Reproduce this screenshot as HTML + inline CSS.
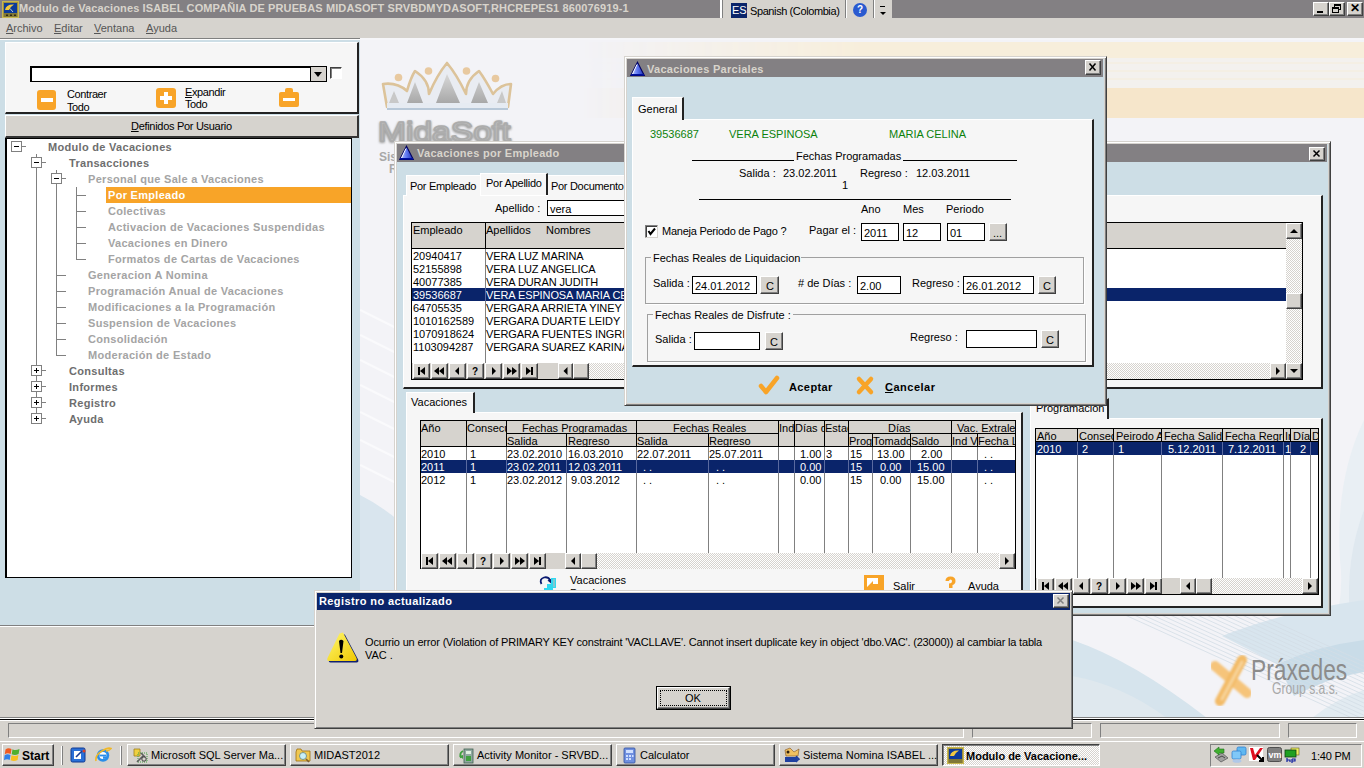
<!DOCTYPE html>
<html><head><meta charset="utf-8">
<style>
*{box-sizing:border-box;margin:0;padding:0}
html,body{width:1364px;height:768px;overflow:hidden;position:relative;background:#d6d3ce;font-family:"Liberation Sans",sans-serif;font-size:11px;color:#000}
.a{position:absolute}
.t{position:absolute;white-space:pre;line-height:13px}
.b{font-weight:bold}
.out{border-top:1px solid #fff;border-left:1px solid #fff;border-right:1px solid #404040;border-bottom:1px solid #404040}
.btn{position:absolute;background:#d6d3ce;border:1px solid;border-color:#fff #404040 #404040 #fff;box-shadow:inset -1px -1px 0 #808080}
.sunk{position:absolute;background:#fff;border:1px solid;border-color:#808080 #fff #fff #808080;box-shadow:inset 1px 1px 0 #404040}
.win{position:absolute;border:1px solid;border-color:#d6d3ce #404040 #404040 #d6d3ce;box-shadow:inset 1px 1px 0 #fff,inset -1px -1px 0 #808080}
.ttl{position:absolute;background:#808080;color:#d6d3ce;font-weight:bold;letter-spacing:0.25px}
.xb{position:absolute;width:16px;height:14px;background:#d6d3ce;border:1px solid;border-color:#fff #404040 #404040 #fff;box-shadow:inset -1px -1px 0 #808080}
.grid{position:absolute;background:#fff;border:1px solid #000}
.hdr{position:absolute;background:#d6d3ce}
.vl{position:absolute;width:1px;background:#808080}
.hl{position:absolute;height:1px;background:#808080}
.sel{position:absolute;background:#0a246a}
.inp{position:absolute;background:#fff;border:1px solid #000;box-shadow:inset 1px 1px 0 #808080}
.tree{color:#6e6e6e;font-weight:bold;letter-spacing:0.3px}
.tree2{color:#a4a4a4;font-weight:bold;letter-spacing:0.3px}
.pm{position:absolute;width:11px;height:11px;border:1px solid #808080;background:#fff}
.pm:after{content:"";position:absolute;left:2px;top:4px;width:5px;height:1px;background:#000}
.pm.p:before{content:"";position:absolute;left:4px;top:2px;width:1px;height:5px;background:#000}
.tl{position:absolute;background:#808080}
</style></head><body>

<!-- ===== MAIN TITLE BAR ===== -->
<div class="a" style="left:0;top:0;width:1364px;height:18px;background:#838083"></div>
<svg class="a" style="left:2px;top:1px" width="17" height="17"><rect x="0.5" y="0.5" width="16" height="16" fill="#a09040" stroke="#c8b850"/><rect x="2" y="2" width="13" height="10" fill="#0c3a9a"/><path d="M3 9 Q4 3 12 3.5 Q8 6 7 9Z" fill="#f0c840"/><path d="M8 7.5 L11 11" stroke="#c0d0d0" stroke-width="1"/><rect x="2" y="12" width="13" height="4" fill="#807838"/><rect x="4" y="13.5" width="2" height="1.5" fill="#302810"/><rect x="8" y="13.5" width="2" height="1.5" fill="#302810"/><rect x="12" y="13.5" width="2" height="1.5" fill="#302810"/></svg>
<div class="t b" style="left:19px;top:2px;color:#d8d4cc;letter-spacing:0.12px">Modulo de Vacaciones ISABEL COMPAÑIA DE PRUEBAS MIDASOFT SRVBDMYDASOFT,RHCREPES1 860076919-1</div>

<!-- language bar -->
<div class="a" style="left:720px;top:0;width:172px;height:22px;background:#d6d3ce"></div><div class="a" style="left:720px;top:0;width:3px;height:21px;border-left:2px solid #fff;border-right:1px solid #808080;border-bottom:1px solid #808080"></div>
<div class="a" style="left:731px;top:3px;width:16px;height:15px;background:#0a246a"></div>
<div class="t" style="left:732px;top:4px;color:#fff;font-size:11px">ES</div>
<div class="t" style="left:750px;top:5px;letter-spacing:-0.4px">Spanish (Colombia)</div>
<div class="a" style="left:845px;top:0;width:1px;height:21px;background:#808080"></div>
<div class="a" style="left:846px;top:0;width:1px;height:21px;background:#fff"></div>
<div class="a" style="left:873px;top:0;width:1px;height:21px;background:#808080"></div>
<div class="a" style="left:874px;top:0;width:1px;height:21px;background:#fff"></div>
<div class="a" style="left:853px;top:3px;width:14px;height:14px;border-radius:50%;background:#2a5ad0;color:#fff;font-weight:bold;font-size:10px;text-align:center;line-height:14px">?</div>
<div class="a" style="left:880px;top:6px;width:5px;height:1px;background:#000"></div>
<div class="a" style="left:880px;top:12px;width:0;height:0;border-left:3px solid transparent;border-right:3px solid transparent;border-top:3px solid #000"></div>

<!-- window buttons -->
<div class="xb" style="left:1313px;top:2px;width:16px;height:14px"></div>
<div class="a" style="left:1317px;top:11px;width:6px;height:2px;background:#000"></div>
<div class="xb" style="left:1329px;top:2px;width:16px;height:14px"></div>
<div class="a" style="left:1334px;top:4px;width:7px;height:6px;border:1px solid #000;border-top-width:2px"></div>
<div class="a" style="left:1332px;top:7px;width:7px;height:6px;border:1px solid #000;border-top-width:2px;background:#d6d3ce"></div>
<div class="xb" style="left:1347px;top:2px;width:16px;height:14px"></div>
<div class="t" style="left:1350px;top:2px;font-size:12px;font-weight:bold">✕</div>

<!-- ===== MENU BAR ===== -->
<div class="a" style="left:0;top:18px;width:1364px;height:20px;background:#d6d3ce"></div>
<div class="t" style="left:6px;top:22px;color:#555"><u>A</u>rchivo</div>
<div class="t" style="left:54px;top:22px;color:#555"><u>E</u>ditar</div>
<div class="t" style="left:94px;top:22px;color:#555"><u>V</u>entana</div>
<div class="t" style="left:146px;top:22px;color:#555"><u>A</u>yuda</div>
<div class="a" style="left:0;top:38px;width:360px;height:1px;background:#808080"></div>
<div class="a" style="left:0;top:39px;width:360px;height:1px;background:#fff"></div><div class="a" style="left:360px;top:38px;width:1004px;height:2px;background:#f6f6f9"></div>

<!-- ===== MDI BACKGROUND ===== -->
<svg id="mdi" class="a" style="left:360px;top:40px" width="1004" height="677">
<defs>
<linearGradient id="fadeR" x1="0" y1="0" x2="1" y2="0"><stop offset="0.22" stop-color="#fff" stop-opacity="0"/><stop offset="0.5" stop-color="#fff" stop-opacity="1"/></linearGradient>
<mask id="mR"><rect width="1004" height="677" fill="url(#fadeR)"/></mask>
<linearGradient id="vfade" x1="0" y1="0" x2="0" y2="1"><stop offset="0" stop-color="#eef0f4"/><stop offset="1" stop-color="#f2f3f6"/></linearGradient>
</defs>
<rect width="1004" height="677" fill="#f3f3f7"/>
<g mask="url(#mR)">
<rect y="2" width="1004" height="16" fill="#f7eedb"/>
<rect y="18" width="1004" height="30" fill="#f3f1ee"/>
<rect y="22" width="1004" height="2" fill="#f4efe4"/>
<rect y="30" width="1004" height="2" fill="#f4efe4"/>
<rect y="38" width="1004" height="2" fill="#f4efe4"/>
<rect y="48" width="1004" height="30" fill="#f6e6cb"/>
</g>
<path d="M0 455 Q30 470 60 500 L60 677 L0 677Z" fill="#d9e5ee"/>
<g stroke="#fbfbfd" stroke-width="2" opacity="0.9"><path d="M0 270 L40 290"/><path d="M0 295 L40 315"/><path d="M0 320 L40 340"/><path d="M0 345 L40 365"/><path d="M0 372 L40 392"/><path d="M0 400 L40 420"/><path d="M0 425 L40 445"/></g>
<path d="M1004 380 Q975 440 980 520 Q985 560 970 600 L1004 600Z" fill="#e9eff4"/>
<path d="M1004 470 Q985 520 990 575 L1004 575Z" fill="#dfe8ef"/>
<path d="M712 677 L712 600 Q740 610 780 640 Q800 660 806 677Z" fill="#dfe8ee"/>
</svg>
<!-- ===== LEFT DOCK ===== -->
<div class="a" style="left:0;top:40px;width:360px;height:585px;background:#cddee6"></div>
<div class="a" style="left:0;top:625px;width:360px;height:1px;background:#808080"></div>
<div class="a" style="left:0;top:626px;width:360px;height:1px;background:#fff"></div>
<div class="a" style="left:0;top:627px;width:360px;height:90px;background:#d6d3ce"></div>

<!-- top panel -->
<div class="a" style="left:5px;top:42px;width:354px;height:72px;background:#f6f6f6;border-right:2px solid #222;border-bottom:2px solid #222;border-top:1px solid #fff;border-left:1px solid #fff"></div>
<div class="a" style="left:30px;top:66px;width:297px;height:16px;background:#fff;border:2px solid #000;border-right-width:1px;border-bottom-width:1px"></div>
<div class="a" style="left:310px;top:67px;width:16px;height:14px;background:#d6d3ce;border-left:1px solid #000"></div>
<div class="a" style="left:314px;top:72px;width:0;height:0;border-left:4px solid transparent;border-right:4px solid transparent;border-top:5px solid #000"></div>
<div class="a" style="left:330px;top:67px;width:12px;height:12px;background:#fff;border:1px solid;border-color:#404040 #fff #fff #404040;box-shadow:inset 1px 1px 0 #808080"></div>
<!-- contraer -->
<div class="a" style="left:37px;top:90px;width:19px;height:20px;background:#f8a428;border-radius:3px"></div>
<div class="a" style="left:41px;top:98px;width:12px;height:4px;background:#fff"></div>
<div class="t" style="left:67px;top:88px;letter-spacing:-0.4px">Contraer</div>
<div class="t" style="left:67px;top:101px;letter-spacing:-0.4px">Todo</div>
<!-- expandir -->
<div class="a" style="left:156px;top:88px;width:20px;height:20px;background:#f8a428;border-radius:3px"></div>
<div class="a" style="left:160px;top:96px;width:12px;height:4px;background:#fff"></div>
<div class="a" style="left:164px;top:92px;width:4px;height:12px;background:#fff"></div>
<div class="t" style="left:185px;top:86px;letter-spacing:-0.4px"><u>E</u>xpandir</div>
<div class="t" style="left:185px;top:98px;letter-spacing:-0.4px">Todo</div>
<!-- third icon -->
<div class="a" style="left:285px;top:88px;width:8px;height:5px;background:#f8a428;border-radius:2px 2px 0 0"></div>
<div class="a" style="left:279px;top:92px;width:20px;height:15px;background:#f8a428;border-radius:2px"></div>
<div class="a" style="left:283px;top:98px;width:12px;height:3px;background:#fff"></div>

<!-- definidos button -->
<div class="a" style="left:5px;top:115px;width:354px;height:23px;background:#d6d3ce;border-right:2px solid #333;border-bottom:2px solid #333;border-top:1px solid #fff;border-left:1px solid #fff"></div>
<div class="t" style="left:131px;top:120px;letter-spacing:-0.3px"><u>D</u>efinidos Por Usuario</div>

<!-- tree -->
<div id="tree" class="a" style="left:5px;top:138px;width:347px;height:440px;background:#fff;border:1px solid #000;border-left-width:2px"></div>
<svg width="0" height="0" style="position:absolute"><defs><linearGradient id="tg" x1="0" y1="0" x2="1" y2="1"><stop offset="0" stop-color="#e0ecff"/><stop offset="0.45" stop-color="#6080f8"/><stop offset="1" stop-color="#1838c0"/></linearGradient><filter id="bl" x="-20%" y="-20%" width="140%" height="140%"><feGaussianBlur stdDeviation="1.5"/></filter><filter id="bl2"><feGaussianBlur stdDeviation="1"/></filter><filter id="bl3" x="-20%" y="-20%" width="140%" height="140%"><feGaussianBlur stdDeviation="0.6"/></filter><linearGradient id="lg1" x1="0" y1="0" x2="0" y2="1"><stop offset="0" stop-color="#d8d8d8"/><stop offset="1" stop-color="#a8a8a8"/></linearGradient></defs></svg>
<!-- TREE -->
<div class="pm" style="left:11px;top:141px"></div>
<div class="tl" style="left:22px;top:146px;width:4px;height:1px"></div>
<div class="t tree" style="left:48px;top:141px">Modulo de Vacaciones</div>
<div class="pm" style="left:31px;top:157px"></div>
<div class="tl" style="left:42px;top:162px;width:4px;height:1px"></div>
<div class="t tree" style="left:69px;top:157px">Transacciones</div>
<div class="pm" style="left:51px;top:173px"></div>
<div class="tl" style="left:62px;top:178px;width:4px;height:1px"></div>
<div class="t tree2" style="left:88px;top:173px">Personal que Sale a Vacaciones</div>
<div class="tl" style="left:76px;top:195px;width:10px;height:1px"></div>
<div class="a" style="left:106px;top:187px;width:245px;height:16px;background:#f8a428"></div>
<div class="t b" style="left:108px;top:189px;color:#fff;letter-spacing:0.3px">Por Empleado</div>
<div class="tl" style="left:76px;top:211px;width:10px;height:1px"></div>
<div class="t tree2" style="left:108px;top:205px">Colectivas</div>
<div class="tl" style="left:76px;top:227px;width:10px;height:1px"></div>
<div class="t tree2" style="left:108px;top:221px">Activacion de Vacaciones Suspendidas</div>
<div class="tl" style="left:76px;top:243px;width:10px;height:1px"></div>
<div class="t tree2" style="left:108px;top:237px">Vacaciones en Dinero</div>
<div class="tl" style="left:76px;top:259px;width:10px;height:1px"></div>
<div class="t tree2" style="left:108px;top:253px">Formatos de Cartas de Vacaciones</div>
<div class="tl" style="left:56px;top:275px;width:10px;height:1px"></div>
<div class="t tree2" style="left:88px;top:269px">Generacion A Nomina</div>
<div class="tl" style="left:56px;top:291px;width:10px;height:1px"></div>
<div class="t tree2" style="left:88px;top:285px">Programación Anual de Vacaciones</div>
<div class="tl" style="left:56px;top:307px;width:10px;height:1px"></div>
<div class="t tree2" style="left:88px;top:301px">Modificaciones a la Programación</div>
<div class="tl" style="left:56px;top:323px;width:10px;height:1px"></div>
<div class="t tree2" style="left:88px;top:317px">Suspension de Vacaciones</div>
<div class="tl" style="left:56px;top:339px;width:10px;height:1px"></div>
<div class="t tree2" style="left:88px;top:333px">Consolidación</div>
<div class="tl" style="left:56px;top:355px;width:10px;height:1px"></div>
<div class="t tree2" style="left:88px;top:349px">Moderación de Estado</div>
<div class="pm p" style="left:31px;top:365px"></div>
<div class="tl" style="left:42px;top:370px;width:4px;height:1px"></div>
<div class="t tree" style="left:69px;top:365px">Consultas</div>
<div class="pm p" style="left:31px;top:381px"></div>
<div class="tl" style="left:42px;top:386px;width:4px;height:1px"></div>
<div class="t tree" style="left:69px;top:381px">Informes</div>
<div class="pm p" style="left:31px;top:397px"></div>
<div class="tl" style="left:42px;top:402px;width:4px;height:1px"></div>
<div class="t tree" style="left:69px;top:397px">Registro</div>
<div class="pm p" style="left:31px;top:413px"></div>
<div class="tl" style="left:42px;top:418px;width:4px;height:1px"></div>
<div class="t tree" style="left:69px;top:413px">Ayuda</div>
<div class="tl" style="left:36px;top:168px;width:1px;height:197px"></div>
<div class="tl" style="left:36px;top:376px;width:1px;height:5px"></div>
<div class="tl" style="left:36px;top:392px;width:1px;height:5px"></div>
<div class="tl" style="left:36px;top:408px;width:1px;height:5px"></div>
<div class="tl" style="left:36px;top:154px;width:1px;height:3px"></div>
<div class="tl" style="left:56px;top:184px;width:1px;height:171px"></div>
<div class="tl" style="left:56px;top:170px;width:1px;height:3px"></div>
<div class="tl" style="left:76px;top:187px;width:1px;height:73px"></div>

<svg class="a" style="left:375px;top:55px" width="150" height="130">
<g filter="url(#bl3)">
<path d="M8 29 Q22 27 32 36 Q36 22 40 16 Q54 25 54 39 Q62 20 72 8 Q82 20 91 39 Q91 25 104 16 Q110 24 118 39 Q126 29 136 29 L133 52 L12 52Z" fill="#e9ecf2" stroke="#dcc39a" stroke-width="2.6" stroke-linejoin="round"/>
</g>
<path d="M32 48 L40 27 L48 48Z M61 48 L72 19 L85 48Z M96 48 L104 27 L113 48Z" fill="url(#lg1)"/>
<path d="M14 48 L19 36 L24 48Z M122 48 L127 36 L131 48Z" fill="#c8c8c8"/>
<rect x="12" y="48" width="121" height="6" fill="#e6ebf2"/>
<rect x="12" y="53" width="121" height="2" fill="#b8c8d8"/>
<circle cx="23.5" cy="22.5" r="3.8" fill="#e8c9a0"/><circle cx="53.5" cy="16" r="3.8" fill="#e8c9a0"/><circle cx="91.5" cy="16" r="3.8" fill="#e8c9a0"/><circle cx="120.5" cy="23.5" r="3.8" fill="#e8c9a0"/>
<text transform="translate(3,87) scale(1.2,1)" font-family="Liberation Sans" font-size="28" fill="#a0a0a0" stroke="#a0a0a0" stroke-width="2.2" stroke-linejoin="round" filter="url(#bl2)">MidaSoft</text>
<text transform="translate(3,86) scale(1.2,1)" font-family="Liberation Sans" font-size="28" fill="#bdbdbd" stroke="#acacac" stroke-width="1.6" stroke-linejoin="round">MidaSoft</text>
<text x="4" y="106" font-family="Liberation Sans" font-weight="bold" font-size="12" fill="#a8a8a8">Sis</text>
<text x="14" y="118" font-family="Liberation Sans" font-weight="bold" font-size="12" fill="#a8a8a8">R</text></svg>
<svg class="a" style="left:1072px;top:600px" width="292" height="118">
<path d="M0 40 Q60 60 135 118 L95 118 Q50 85 0 76Z" fill="#d6e4ed"/>
<path d="M150 36 Q210 12 292 0 L292 42 Q240 48 205 64 Z" fill="#d8e5ee"/>
<path d="M205 64 Q245 46 292 40 L292 72 Q255 78 222 96 Z" fill="#c9dce8"/>
<path d="M240 118 Q265 98 292 90 L292 118Z" fill="#e2ebf1"/>
<g stroke="#d3dde6" stroke-width="0.8" fill="none"><path d="M20 0 L280 118"/><path d="M29 0 L289 118"/><path d="M38 0 L298 118"/><path d="M47 0 L307 118"/><path d="M56 0 L316 118"/><path d="M65 0 L325 118"/><path d="M74 0 L334 118"/><path d="M83 0 L343 118"/><path d="M92 0 L352 118"/><path d="M101 0 L361 118"/><path d="M110 0 L370 118"/><path d="M119 0 L379 118"/><path d="M128 0 L388 118"/><path d="M137 0 L397 118"/><path d="M146 0 L406 118"/><path d="M155 0 L415 118"/></g>
<g filter="url(#bl2)" stroke-linecap="round"><path d="M143 66 L175 93" stroke="#f6c47a" stroke-width="10"/><path d="M170 60 L148 101" stroke="#f3bb68" stroke-width="10"/><path d="M170 62 L150 99" stroke="#f8d49a" stroke-width="3"/></g>
<text transform="translate(179,80) scale(0.76,1)" font-family="Liberation Sans" font-size="30" fill="#8c8c8c">Práxedes</text>
<text transform="translate(200,94) scale(0.76,1)" font-family="Liberation Sans" font-size="16" fill="#a8a8a8">Group s.a.s.</text></svg>
<div class="a" style="left:394px;top:141px;width:937px;height:475px;background:#cddee6;border:1px solid;border-color:#d6d3ce #404040 #404040 #d6d3ce;box-shadow:inset 1px 1px 0 #fff,inset -1px -1px 0 #808080,inset 2px 2px 0 #d6d3ce,inset -2px -2px 0 #d6d3ce;"></div>
<div class="a" style="left:397px;top:144px;width:930px;height:18px;background:#838083"></div>
<svg class="a" style="left:399px;top:145px" width="16" height="16"><defs><linearGradient id="tg2" x1="0" y1="0" x2="1" y2="0"><stop offset="0" stop-color="#c8d4ff"/><stop offset="0.5" stop-color="#6078f0"/><stop offset="1" stop-color="#1a2cb0"/></linearGradient></defs><path d="M7.5 1.2L14.3 14.5H0.7Z" fill="url(#tg2)" stroke="#000060" stroke-width="1.1" stroke-linejoin="miter"/><path d="M7 3.5L2.5 13" stroke="#fff" stroke-width="1"/><rect x="1" y="13" width="13" height="1.6" fill="#0010a0"/></svg>
<div class="t b" style="left:417px;top:147px;letter-spacing:0.27px;color:#d8d4cc">Vacaciones por Empleado</div>
<div class="a" style="left:1309px;top:147px;width:16px;height:14px;background:#d6d3ce;border:1px solid;border-color:#fff #404040 #404040 #fff;box-shadow:inset -1px -1px 0 #808080;"></div>
<svg class="a" style="left:1309px;top:147px" width="16" height="14"><path d="M4.5 3.5L10.5 9.5M10.5 3.5L4.5 9.5" stroke="#000" stroke-width="1.5"/></svg>
<div class="a" style="left:403px;top:195px;width:920px;height:194px;background:#f6f6f6;border-top:1px solid #fff;border-left:1px solid #fff;border-right:2px solid #222;border-bottom:2px solid #222"></div>
<div class="a" style="left:406px;top:175px;width:74px;height:21px;background:#f6f6f6;border-top:1px solid #fff;border-left:1px solid #fff"></div>
<div class="t " style="left:410px;top:180px;letter-spacing:-0.3px">Por Empleado</div>
<div class="a" style="left:480px;top:173px;width:68px;height:22px;background:#f6f6f6;border-top:1px solid #fff;border-left:1px solid #fff;border-right:2px solid #222"></div>
<div class="t " style="left:486px;top:177px;letter-spacing:-0.25px">Por Apellido</div>
<div class="a" style="left:548px;top:175px;width:80px;height:21px;background:#f6f6f6;border-top:1px solid #fff"></div>
<div class="t " style="left:551px;top:180px;letter-spacing:-0.3px">Por Documento</div>
<div class="t " style="left:495px;top:202px;">Apellido :</div>
<div class="a" style="left:547px;top:200px;width:80px;height:16px;background:#fff;border:1px solid #000;border-right:none"></div>
<div class="t " style="left:550px;top:203px;">vera</div>
<div class="a" style="left:411px;top:222px;width:892px;height:158px;background:#fff;border:1px solid #000"></div>
<div class="a" style="left:412px;top:223px;width:874px;height:26px;background:#d6d3ce;border-bottom:1px solid #000"></div>
<div class="a" style="left:485px;top:223px;width:1px;height:25px;background:#000"></div>
<div class="t " style="left:413px;top:224px;">Empleado</div>
<div class="t " style="left:486px;top:224px;">Apellidos</div>
<div class="t " style="left:546px;top:224px;">Nombres</div>
<div class="a" style="left:485px;top:249px;width:1px;height:114px;background:#808080"></div>
<div class="t " style="left:413px;top:250px;">20940417</div>
<div class="t " style="left:486px;top:250px;letter-spacing:-0.1px">VERA LUZ MARINA</div>
<div class="t " style="left:413px;top:263px;">52155898</div>
<div class="t " style="left:486px;top:263px;letter-spacing:-0.1px">VERA LUZ ANGELICA</div>
<div class="t " style="left:413px;top:276px;">40077385</div>
<div class="t " style="left:486px;top:276px;letter-spacing:-0.1px">VERA DURAN JUDITH</div>
<div class="a" style="left:412px;top:288px;width:874px;height:13px;background:#0a246a"></div>
<div class="a" style="left:485px;top:288px;width:1px;height:13px;background:#5a6aa0"></div>
<div class="t " style="left:413px;top:289px;color:#fff">39536687</div>
<div class="t " style="left:486px;top:289px;color:#fff;letter-spacing:-0.1px">VERA ESPINOSA MARIA CELINA</div>
<div class="t " style="left:413px;top:302px;">64705535</div>
<div class="t " style="left:486px;top:302px;letter-spacing:-0.1px">VERGARA ARRIETA YINEY</div>
<div class="t " style="left:413px;top:315px;">1010162589</div>
<div class="t " style="left:486px;top:315px;letter-spacing:-0.1px">VERGARA DUARTE LEIDY</div>
<div class="t " style="left:413px;top:328px;">1070918624</div>
<div class="t " style="left:486px;top:328px;letter-spacing:-0.1px">VERGARA FUENTES INGRID</div>
<div class="t " style="left:413px;top:341px;">1103094287</div>
<div class="t " style="left:486px;top:341px;letter-spacing:-0.1px">VERGARA SUAREZ KARINA</div>
<div class="a" style="left:1286px;top:223px;width:16px;height:156px;background:repeating-conic-gradient(#d6d3ce 0 25%,#fff 0 50%) 0 0/2px 2px"></div>
<div class="a" style="left:1286px;top:223px;width:16px;height:16px;background:#d6d3ce;border:1px solid;border-color:#fff #404040 #404040 #fff;box-shadow:inset -1px -1px 0 #808080;"></div>
<svg class="a" style="left:1286px;top:223px" width="16" height="16"><path d="M4.0 10.0h8L8.0 6.0z" fill="#000"/></svg>
<div class="a" style="left:1286px;top:293px;width:16px;height:16px;background:#d6d3ce;border:1px solid;border-color:#fff #404040 #404040 #fff;box-shadow:inset -1px -1px 0 #808080;"></div>
<div class="a" style="left:1286px;top:363px;width:16px;height:16px;background:#d6d3ce;border:1px solid;border-color:#fff #404040 #404040 #fff;box-shadow:inset -1px -1px 0 #808080;"></div>
<svg class="a" style="left:1286px;top:363px" width="16" height="16"><path d="M4.0 6.0h8L8.0 10.0z" fill="#000"/></svg>
<div class="a" style="left:412px;top:363px;width:874px;height:16px;background:repeating-conic-gradient(#d6d3ce 0 25%,#fff 0 50%) 0 0/2px 2px"></div>
<div class="a" style="left:412px;top:363px;width:146px;height:16px;background:#d6d3ce"></div>
<div class="a" style="left:413px;top:363px;width:17px;height:16px;background:#d6d3ce;border:1px solid;border-color:#fff #404040 #404040 #fff;box-shadow:inset -1px -1px 0 #808080;"></div>
<svg class="a" style="left:413px;top:363px" width="17" height="16"><path d="M5 4h2v8H5z M12 4v8L7 8z" fill="#000"/></svg>
<div class="a" style="left:431px;top:363px;width:17px;height:16px;background:#d6d3ce;border:1px solid;border-color:#fff #404040 #404040 #fff;box-shadow:inset -1px -1px 0 #808080;"></div>
<svg class="a" style="left:431px;top:363px" width="17" height="16"><path d="M8 4v8L3 8z M13 4v8L8 8z" fill="#000"/></svg>
<div class="a" style="left:449px;top:363px;width:17px;height:16px;background:#d6d3ce;border:1px solid;border-color:#fff #404040 #404040 #fff;box-shadow:inset -1px -1px 0 #808080;"></div>
<svg class="a" style="left:449px;top:363px" width="17" height="16"><path d="M10 4v8L6 8z" fill="#000"/></svg>
<div class="a" style="left:467px;top:363px;width:17px;height:16px;background:#d6d3ce;border:1px solid;border-color:#fff #404040 #404040 #fff;box-shadow:inset -1px -1px 0 #808080;"></div>
<div class="t b" style="left:472px;top:365px;font-size:10px">?</div>
<div class="a" style="left:485px;top:363px;width:17px;height:16px;background:#d6d3ce;border:1px solid;border-color:#fff #404040 #404040 #fff;box-shadow:inset -1px -1px 0 #808080;"></div>
<svg class="a" style="left:485px;top:363px" width="17" height="16"><path d="M7 4v8L11 8z" fill="#000"/></svg>
<div class="a" style="left:503px;top:363px;width:17px;height:16px;background:#d6d3ce;border:1px solid;border-color:#fff #404040 #404040 #fff;box-shadow:inset -1px -1px 0 #808080;"></div>
<svg class="a" style="left:503px;top:363px" width="17" height="16"><path d="M4 4v8L9 8z M9 4v8L14 8z" fill="#000"/></svg>
<div class="a" style="left:521px;top:363px;width:17px;height:16px;background:#d6d3ce;border:1px solid;border-color:#fff #404040 #404040 #fff;box-shadow:inset -1px -1px 0 #808080;"></div>
<svg class="a" style="left:521px;top:363px" width="17" height="16"><path d="M5 4v8L10 8z M10 4h2v8h-2z" fill="#000"/></svg>
<div class="a" style="left:558px;top:363px;width:15px;height:16px;background:#d6d3ce;border:1px solid;border-color:#fff #404040 #404040 #fff;box-shadow:inset -1px -1px 0 #808080;"></div>
<svg class="a" style="left:558px;top:363px" width="15" height="16"><path d="M9.5 4.0v8L5.5 8.0z" fill="#000"/></svg>
<div class="a" style="left:573px;top:363px;width:16px;height:16px;background:#d6d3ce;border:1px solid;border-color:#fff #404040 #404040 #fff;box-shadow:inset -1px -1px 0 #808080;"></div>
<div class="a" style="left:1270px;top:363px;width:16px;height:16px;background:#d6d3ce;border:1px solid;border-color:#fff #404040 #404040 #fff;box-shadow:inset -1px -1px 0 #808080;"></div>
<svg class="a" style="left:1270px;top:363px" width="16" height="16"><path d="M6.0 4.0v8L10.0 8.0z" fill="#000"/></svg>
<div class="a" style="left:406px;top:412px;width:617px;height:200px;background:#f6f6f6;border-top:1px solid #fff;border-left:1px solid #fff;border-right:2px solid #222;border-bottom:2px solid #222"></div>
<div class="a" style="left:406px;top:392px;width:69px;height:21px;background:#f6f6f6;border-top:1px solid #fff;border-left:1px solid #fff;border-right:2px solid #222"></div>
<div class="t " style="left:411px;top:396px;">Vacaciones</div>
<div class="a" style="left:420px;top:420px;width:596px;height:149px;background:#fff;border:1px solid #000"></div>
<div class="a" style="left:421px;top:421px;width:594px;height:26px;background:#d6d3ce;border-bottom:1px solid #000"></div>
<div class="a" style="left:466px;top:447px;width:1px;height:106px;background:#808080"></div>
<div class="a" style="left:506px;top:447px;width:1px;height:106px;background:#808080"></div>
<div class="a" style="left:566px;top:447px;width:1px;height:106px;background:#808080"></div>
<div class="a" style="left:636px;top:447px;width:1px;height:106px;background:#808080"></div>
<div class="a" style="left:708px;top:447px;width:1px;height:106px;background:#808080"></div>
<div class="a" style="left:778px;top:447px;width:1px;height:106px;background:#808080"></div>
<div class="a" style="left:794px;top:447px;width:1px;height:106px;background:#808080"></div>
<div class="a" style="left:824px;top:447px;width:1px;height:106px;background:#808080"></div>
<div class="a" style="left:848px;top:447px;width:1px;height:106px;background:#808080"></div>
<div class="a" style="left:872px;top:447px;width:1px;height:106px;background:#808080"></div>
<div class="a" style="left:910px;top:447px;width:1px;height:106px;background:#808080"></div>
<div class="a" style="left:951px;top:447px;width:1px;height:106px;background:#808080"></div>
<div class="a" style="left:977px;top:447px;width:1px;height:106px;background:#808080"></div>
<div class="a" style="left:466px;top:421px;width:1px;height:26px;background:#000"></div>
<div class="a" style="left:506px;top:421px;width:1px;height:26px;background:#000"></div>
<div class="a" style="left:636px;top:421px;width:1px;height:26px;background:#000"></div>
<div class="a" style="left:778px;top:421px;width:1px;height:26px;background:#000"></div>
<div class="a" style="left:794px;top:421px;width:1px;height:26px;background:#000"></div>
<div class="a" style="left:824px;top:421px;width:1px;height:26px;background:#000"></div>
<div class="a" style="left:848px;top:421px;width:1px;height:26px;background:#000"></div>
<div class="a" style="left:951px;top:421px;width:1px;height:26px;background:#000"></div>
<div class="a" style="left:566px;top:434px;width:1px;height:13px;background:#000"></div>
<div class="a" style="left:708px;top:434px;width:1px;height:13px;background:#000"></div>
<div class="a" style="left:872px;top:434px;width:1px;height:13px;background:#000"></div>
<div class="a" style="left:910px;top:434px;width:1px;height:13px;background:#000"></div>
<div class="a" style="left:977px;top:434px;width:1px;height:13px;background:#000"></div>
<div class="a" style="left:506px;top:433px;width:272px;height:1px;background:#000"></div>
<div class="a" style="left:848px;top:433px;width:167px;height:1px;background:#000"></div>
<div class="a" style="left:421px;top:420px;width:45px;height:13px;overflow:hidden"><div class="t " style="left:0px;top:2px;">Año</div></div>
<div class="a" style="left:467px;top:420px;width:39px;height:13px;overflow:hidden"><div class="t " style="left:0px;top:2px;">Consecutivo</div></div>
<div class="a" style="left:507px;top:420px;width:271px;height:13px;overflow:hidden"><div class="t " style="left:15px;top:2px;">Fechas Programadas</div></div>
<div class="a" style="left:637px;top:420px;width:141px;height:13px;overflow:hidden"><div class="t " style="left:36px;top:2px;">Fechas Reales</div></div>
<div class="a" style="left:779px;top:420px;width:15px;height:13px;overflow:hidden"><div class="t " style="left:0px;top:2px;">Indicador</div></div>
<div class="a" style="left:795px;top:420px;width:29px;height:13px;overflow:hidden"><div class="t " style="left:0px;top:2px;">Días de</div></div>
<div class="a" style="left:825px;top:420px;width:23px;height:13px;overflow:hidden"><div class="t " style="left:0px;top:2px;">Estado</div></div>
<div class="a" style="left:849px;top:420px;width:102px;height:13px;overflow:hidden"><div class="t " style="left:39px;top:2px;">Días</div></div>
<div class="a" style="left:952px;top:420px;width:63px;height:13px;overflow:hidden"><div class="t " style="left:5px;top:2px;">Vac. Extralegales</div></div>
<div class="a" style="left:507px;top:433px;width:59px;height:13px;overflow:hidden"><div class="t " style="left:0px;top:2px;">Salida</div></div>
<div class="a" style="left:567px;top:433px;width:69px;height:13px;overflow:hidden"><div class="t " style="left:1px;top:2px;">Regreso</div></div>
<div class="a" style="left:637px;top:433px;width:71px;height:13px;overflow:hidden"><div class="t " style="left:0px;top:2px;">Salida</div></div>
<div class="a" style="left:709px;top:433px;width:69px;height:13px;overflow:hidden"><div class="t " style="left:0px;top:2px;">Regreso</div></div>
<div class="a" style="left:849px;top:433px;width:23px;height:13px;overflow:hidden"><div class="t " style="left:0px;top:2px;">Programados</div></div>
<div class="a" style="left:873px;top:433px;width:37px;height:13px;overflow:hidden"><div class="t " style="left:0px;top:2px;">Tomados</div></div>
<div class="a" style="left:911px;top:433px;width:40px;height:13px;overflow:hidden"><div class="t " style="left:0px;top:2px;">Saldo</div></div>
<div class="a" style="left:952px;top:433px;width:25px;height:13px;overflow:hidden"><div class="t " style="left:0px;top:2px;">Ind Vac</div></div>
<div class="a" style="left:978px;top:433px;width:37px;height:13px;overflow:hidden"><div class="t " style="left:0px;top:2px;">Fecha Liquidacion</div></div>
<div class="t " style="left:421px;top:448px;color:#000">2010</div>
<div class="t " style="left:470px;top:448px;color:#000">1</div>
<div class="t " style="left:507px;top:448px;color:#000">23.02.2010</div>
<div class="t " style="left:568px;top:448px;color:#000">16.03.2010</div>
<div class="t " style="left:637px;top:448px;color:#000">22.07.2011</div>
<div class="t " style="left:709px;top:448px;color:#000">25.07.2011</div>
<div class="t " style="left:800px;top:448px;color:#000">1.00</div>
<div class="t " style="left:826px;top:448px;color:#000">3</div>
<div class="t " style="left:850px;top:448px;color:#000">15</div>
<div class="t " style="left:877px;top:448px;color:#000">13.00</div>
<div class="t " style="left:921px;top:448px;color:#000">2.00</div>
<div class="t " style="left:984px;top:448px;color:#000">. .</div>
<div class="a" style="left:421px;top:460px;width:594px;height:13px;background:#0a246a"></div>
<div class="a" style="left:466px;top:460px;width:1px;height:13px;background:#5a6aa0"></div>
<div class="a" style="left:506px;top:460px;width:1px;height:13px;background:#5a6aa0"></div>
<div class="a" style="left:566px;top:460px;width:1px;height:13px;background:#5a6aa0"></div>
<div class="a" style="left:636px;top:460px;width:1px;height:13px;background:#5a6aa0"></div>
<div class="a" style="left:708px;top:460px;width:1px;height:13px;background:#5a6aa0"></div>
<div class="a" style="left:778px;top:460px;width:1px;height:13px;background:#5a6aa0"></div>
<div class="a" style="left:794px;top:460px;width:1px;height:13px;background:#5a6aa0"></div>
<div class="a" style="left:824px;top:460px;width:1px;height:13px;background:#5a6aa0"></div>
<div class="a" style="left:848px;top:460px;width:1px;height:13px;background:#5a6aa0"></div>
<div class="a" style="left:872px;top:460px;width:1px;height:13px;background:#5a6aa0"></div>
<div class="a" style="left:910px;top:460px;width:1px;height:13px;background:#5a6aa0"></div>
<div class="a" style="left:951px;top:460px;width:1px;height:13px;background:#5a6aa0"></div>
<div class="a" style="left:977px;top:460px;width:1px;height:13px;background:#5a6aa0"></div>
<div class="t " style="left:421px;top:461px;color:#fff">2011</div>
<div class="t " style="left:470px;top:461px;color:#fff">1</div>
<div class="t " style="left:507px;top:461px;color:#fff">23.02.2011</div>
<div class="t " style="left:568px;top:461px;color:#fff">12.03.2011</div>
<div class="t " style="left:643px;top:461px;color:#fff">. .</div>
<div class="t " style="left:716px;top:461px;color:#fff">. .</div>
<div class="t " style="left:800px;top:461px;color:#fff">0.00</div>
<div class="t " style="left:826px;top:461px;color:#fff"></div>
<div class="t " style="left:850px;top:461px;color:#fff">15</div>
<div class="t " style="left:880px;top:461px;color:#fff">0.00</div>
<div class="t " style="left:917px;top:461px;color:#fff">15.00</div>
<div class="t " style="left:984px;top:461px;color:#fff">. .</div>
<div class="t " style="left:421px;top:474px;color:#000">2012</div>
<div class="t " style="left:470px;top:474px;color:#000">1</div>
<div class="t " style="left:507px;top:474px;color:#000">23.02.2012</div>
<div class="t " style="left:568px;top:474px;color:#000"> 9.03.2012</div>
<div class="t " style="left:643px;top:474px;color:#000">. .</div>
<div class="t " style="left:716px;top:474px;color:#000">. .</div>
<div class="t " style="left:800px;top:474px;color:#000">0.00</div>
<div class="t " style="left:826px;top:474px;color:#000"></div>
<div class="t " style="left:850px;top:474px;color:#000">15</div>
<div class="t " style="left:880px;top:474px;color:#000">0.00</div>
<div class="t " style="left:917px;top:474px;color:#000">15.00</div>
<div class="t " style="left:984px;top:474px;color:#000">. .</div>
<div class="a" style="left:421px;top:553px;width:594px;height:16px;background:repeating-conic-gradient(#d6d3ce 0 25%,#fff 0 50%) 0 0/2px 2px"></div>
<div class="a" style="left:421px;top:553px;width:144px;height:16px;background:#d6d3ce"></div>
<div class="a" style="left:421px;top:553px;width:17px;height:16px;background:#d6d3ce;border:1px solid;border-color:#fff #404040 #404040 #fff;box-shadow:inset -1px -1px 0 #808080;"></div>
<svg class="a" style="left:421px;top:553px" width="17" height="16"><path d="M5 4h2v8H5z M12 4v8L7 8z" fill="#000"/></svg>
<div class="a" style="left:439px;top:553px;width:17px;height:16px;background:#d6d3ce;border:1px solid;border-color:#fff #404040 #404040 #fff;box-shadow:inset -1px -1px 0 #808080;"></div>
<svg class="a" style="left:439px;top:553px" width="17" height="16"><path d="M8 4v8L3 8z M13 4v8L8 8z" fill="#000"/></svg>
<div class="a" style="left:457px;top:553px;width:17px;height:16px;background:#d6d3ce;border:1px solid;border-color:#fff #404040 #404040 #fff;box-shadow:inset -1px -1px 0 #808080;"></div>
<svg class="a" style="left:457px;top:553px" width="17" height="16"><path d="M10 4v8L6 8z" fill="#000"/></svg>
<div class="a" style="left:475px;top:553px;width:17px;height:16px;background:#d6d3ce;border:1px solid;border-color:#fff #404040 #404040 #fff;box-shadow:inset -1px -1px 0 #808080;"></div>
<div class="t b" style="left:480px;top:555px;font-size:10px">?</div>
<div class="a" style="left:493px;top:553px;width:17px;height:16px;background:#d6d3ce;border:1px solid;border-color:#fff #404040 #404040 #fff;box-shadow:inset -1px -1px 0 #808080;"></div>
<svg class="a" style="left:493px;top:553px" width="17" height="16"><path d="M7 4v8L11 8z" fill="#000"/></svg>
<div class="a" style="left:511px;top:553px;width:17px;height:16px;background:#d6d3ce;border:1px solid;border-color:#fff #404040 #404040 #fff;box-shadow:inset -1px -1px 0 #808080;"></div>
<svg class="a" style="left:511px;top:553px" width="17" height="16"><path d="M4 4v8L9 8z M9 4v8L14 8z" fill="#000"/></svg>
<div class="a" style="left:529px;top:553px;width:17px;height:16px;background:#d6d3ce;border:1px solid;border-color:#fff #404040 #404040 #fff;box-shadow:inset -1px -1px 0 #808080;"></div>
<svg class="a" style="left:529px;top:553px" width="17" height="16"><path d="M5 4v8L10 8z M10 4h2v8h-2z" fill="#000"/></svg>
<div class="a" style="left:565px;top:553px;width:16px;height:16px;background:#d6d3ce;border:1px solid;border-color:#fff #404040 #404040 #fff;box-shadow:inset -1px -1px 0 #808080;"></div>
<svg class="a" style="left:565px;top:553px" width="16" height="16"><path d="M10.0 4.0v8L6.0 8.0z" fill="#000"/></svg>
<div class="a" style="left:581px;top:553px;width:16px;height:16px;background:#d6d3ce;border:1px solid;border-color:#fff #404040 #404040 #fff;box-shadow:inset -1px -1px 0 #808080;"></div>
<div class="a" style="left:999px;top:553px;width:16px;height:16px;background:#d6d3ce;border:1px solid;border-color:#fff #404040 #404040 #fff;box-shadow:inset -1px -1px 0 #808080;"></div>
<svg class="a" style="left:999px;top:553px" width="16" height="16"><path d="M6.0 4.0v8L10.0 8.0z" fill="#000"/></svg>
<svg class="a" style="left:538px;top:574px" width="20" height="18"><path d="M3.5 10 Q1 5 6 3.5 Q10 2.5 12 6" stroke="#0a1a70" stroke-width="1.8" fill="none"/><path d="M9.5 6.5 L14 4.5 L13 9.5Z" fill="#0a1a70"/><path d="M13 4h5v10h-3v3H6v-3h3v-4h4z" fill="#30d8f0"/><path d="M15 5h2v8h-2z" fill="#80c8d0"/></svg>
<div class="t " style="left:570px;top:574px;">Vacaciones</div>
<div class="t " style="left:570px;top:587px;">Parciales</div>
<svg class="a" style="left:864px;top:575px" width="20" height="16"><rect x="1.5" y="1.5" width="17" height="16" fill="#fff" stroke="#f8a428" stroke-width="3"/><path d="M3 12 L9 6 L9 9 L15 9 L15 15 L3 15Z" fill="#f8a428"/><rect x="14" y="3" width="3" height="13" fill="#f8a428"/></svg>
<div class="t " style="left:893px;top:580px;">Salir</div>
<svg class="a" style="left:943px;top:575px" width="15" height="16"><path d="M2.5 6 Q2.5 1.5 7.5 1.5 Q12.5 1.5 12.5 6 Q12.5 9 9.5 10 L9.5 13 L6 13 L6 8.5 Q9 8.5 9 6 Q9 4.5 7.5 4.5 Q6 4.5 6 6Z" fill="#f8a428"/></svg>
<div class="t " style="left:968px;top:580px;">Ayuda</div>
<div class="a" style="left:1030px;top:418px;width:293px;height:190px;background:#f6f6f6;border-top:1px solid #fff;border-left:1px solid #fff;border-right:2px solid #222;border-bottom:2px solid #222"></div>
<div class="a" style="left:1030px;top:398px;width:79px;height:21px;background:#f6f6f6;border-top:1px solid #fff;border-left:1px solid #fff;border-right:2px solid #222"></div>
<div class="t " style="left:1036px;top:402px;">Programación</div>
<div class="a" style="left:1035px;top:428px;width:284px;height:167px;background:#fff;border:1px solid #000"></div>
<div class="a" style="left:1036px;top:429px;width:282px;height:13px;background:#d6d3ce;border-bottom:1px solid #000"></div>
<div class="a" style="left:1077px;top:429px;width:1px;height:149px;background:#808080"></div>
<div class="a" style="left:1113px;top:429px;width:1px;height:149px;background:#808080"></div>
<div class="a" style="left:1161px;top:429px;width:1px;height:149px;background:#808080"></div>
<div class="a" style="left:1222px;top:429px;width:1px;height:149px;background:#808080"></div>
<div class="a" style="left:1283px;top:429px;width:1px;height:149px;background:#808080"></div>
<div class="a" style="left:1290px;top:429px;width:1px;height:149px;background:#808080"></div>
<div class="a" style="left:1310px;top:429px;width:1px;height:149px;background:#808080"></div>
<div class="a" style="left:1077px;top:429px;width:1px;height:13px;background:#000"></div>
<div class="a" style="left:1113px;top:429px;width:1px;height:13px;background:#000"></div>
<div class="a" style="left:1161px;top:429px;width:1px;height:13px;background:#000"></div>
<div class="a" style="left:1222px;top:429px;width:1px;height:13px;background:#000"></div>
<div class="a" style="left:1283px;top:429px;width:1px;height:13px;background:#000"></div>
<div class="a" style="left:1290px;top:429px;width:1px;height:13px;background:#000"></div>
<div class="a" style="left:1310px;top:429px;width:1px;height:13px;background:#000"></div>
<div class="a" style="left:1036px;top:428px;width:41px;height:13px;overflow:hidden"><div class="t " style="left:1px;top:2px;">Año</div></div>
<div class="a" style="left:1078px;top:428px;width:35px;height:13px;overflow:hidden"><div class="t " style="left:1px;top:2px;">Consecutivo</div></div>
<div class="a" style="left:1114px;top:428px;width:47px;height:13px;overflow:hidden"><div class="t " style="left:2px;top:2px;">Peirodo Año</div></div>
<div class="a" style="left:1162px;top:428px;width:60px;height:13px;overflow:hidden"><div class="t " style="left:2px;top:2px;">Fecha Salida</div></div>
<div class="a" style="left:1223px;top:428px;width:60px;height:13px;overflow:hidden"><div class="t " style="left:2px;top:2px;">Fecha Regreso</div></div>
<div class="a" style="left:1284px;top:428px;width:6px;height:13px;overflow:hidden"><div class="t " style="left:1px;top:2px;">Ind</div></div>
<div class="a" style="left:1291px;top:428px;width:19px;height:13px;overflow:hidden"><div class="t " style="left:2px;top:2px;">Días</div></div>
<div class="a" style="left:1311px;top:428px;width:7px;height:13px;overflow:hidden"><div class="t " style="left:1px;top:2px;">Dias</div></div>
<div class="a" style="left:1036px;top:442px;width:282px;height:13px;background:#0a246a"></div>
<div class="a" style="left:1077px;top:442px;width:1px;height:13px;background:#5a6aa0"></div>
<div class="a" style="left:1113px;top:442px;width:1px;height:13px;background:#5a6aa0"></div>
<div class="a" style="left:1161px;top:442px;width:1px;height:13px;background:#5a6aa0"></div>
<div class="a" style="left:1222px;top:442px;width:1px;height:13px;background:#5a6aa0"></div>
<div class="a" style="left:1283px;top:442px;width:1px;height:13px;background:#5a6aa0"></div>
<div class="a" style="left:1290px;top:442px;width:1px;height:13px;background:#5a6aa0"></div>
<div class="a" style="left:1310px;top:442px;width:1px;height:13px;background:#5a6aa0"></div>
<div class="t " style="left:1037px;top:443px;color:#fff">2010</div>
<div class="t " style="left:1082px;top:443px;color:#fff">2</div>
<div class="t " style="left:1118px;top:443px;color:#fff">1</div>
<div class="t " style="left:1168px;top:443px;color:#fff">5.12.2011</div>
<div class="t " style="left:1228px;top:443px;color:#fff">7.12.2011</div>
<div class="t " style="left:1285px;top:443px;color:#fff">1</div>
<div class="t " style="left:1300px;top:443px;color:#fff">2</div>
<div class="a" style="left:1036px;top:578px;width:282px;height:16px;background:repeating-conic-gradient(#d6d3ce 0 25%,#fff 0 50%) 0 0/2px 2px"></div>
<div class="a" style="left:1036px;top:578px;width:144px;height:16px;background:#d6d3ce"></div>
<div class="a" style="left:1037px;top:578px;width:17px;height:16px;background:#d6d3ce;border:1px solid;border-color:#fff #404040 #404040 #fff;box-shadow:inset -1px -1px 0 #808080;"></div>
<svg class="a" style="left:1037px;top:578px" width="17" height="16"><path d="M5 4h2v8H5z M12 4v8L7 8z" fill="#000"/></svg>
<div class="a" style="left:1055px;top:578px;width:17px;height:16px;background:#d6d3ce;border:1px solid;border-color:#fff #404040 #404040 #fff;box-shadow:inset -1px -1px 0 #808080;"></div>
<svg class="a" style="left:1055px;top:578px" width="17" height="16"><path d="M8 4v8L3 8z M13 4v8L8 8z" fill="#000"/></svg>
<div class="a" style="left:1073px;top:578px;width:17px;height:16px;background:#d6d3ce;border:1px solid;border-color:#fff #404040 #404040 #fff;box-shadow:inset -1px -1px 0 #808080;"></div>
<svg class="a" style="left:1073px;top:578px" width="17" height="16"><path d="M10 4v8L6 8z" fill="#000"/></svg>
<div class="a" style="left:1091px;top:578px;width:17px;height:16px;background:#d6d3ce;border:1px solid;border-color:#fff #404040 #404040 #fff;box-shadow:inset -1px -1px 0 #808080;"></div>
<div class="t b" style="left:1096px;top:580px;font-size:10px">?</div>
<div class="a" style="left:1109px;top:578px;width:17px;height:16px;background:#d6d3ce;border:1px solid;border-color:#fff #404040 #404040 #fff;box-shadow:inset -1px -1px 0 #808080;"></div>
<svg class="a" style="left:1109px;top:578px" width="17" height="16"><path d="M7 4v8L11 8z" fill="#000"/></svg>
<div class="a" style="left:1127px;top:578px;width:17px;height:16px;background:#d6d3ce;border:1px solid;border-color:#fff #404040 #404040 #fff;box-shadow:inset -1px -1px 0 #808080;"></div>
<svg class="a" style="left:1127px;top:578px" width="17" height="16"><path d="M4 4v8L9 8z M9 4v8L14 8z" fill="#000"/></svg>
<div class="a" style="left:1145px;top:578px;width:17px;height:16px;background:#d6d3ce;border:1px solid;border-color:#fff #404040 #404040 #fff;box-shadow:inset -1px -1px 0 #808080;"></div>
<svg class="a" style="left:1145px;top:578px" width="17" height="16"><path d="M5 4v8L10 8z M10 4h2v8h-2z" fill="#000"/></svg>
<div class="a" style="left:1180px;top:578px;width:16px;height:16px;background:#d6d3ce;border:1px solid;border-color:#fff #404040 #404040 #fff;box-shadow:inset -1px -1px 0 #808080;"></div>
<svg class="a" style="left:1180px;top:578px" width="16" height="16"><path d="M10.0 4.0v8L6.0 8.0z" fill="#000"/></svg>
<div class="a" style="left:1196px;top:578px;width:16px;height:16px;background:#d6d3ce;border:1px solid;border-color:#fff #404040 #404040 #fff;box-shadow:inset -1px -1px 0 #808080;"></div>
<div class="a" style="left:1302px;top:578px;width:16px;height:16px;background:#d6d3ce;border:1px solid;border-color:#fff #404040 #404040 #fff;box-shadow:inset -1px -1px 0 #808080;"></div>
<svg class="a" style="left:1302px;top:578px" width="16" height="16"><path d="M6.0 4.0v8L10.0 8.0z" fill="#000"/></svg>
<div class="a" style="left:624px;top:56px;width:483px;height:350px;background:#cddee6;border:1px solid;border-color:#d6d3ce #404040 #404040 #d6d3ce;box-shadow:inset 1px 1px 0 #fff,inset -1px -1px 0 #808080,inset 2px 2px 0 #d6d3ce,inset -2px -2px 0 #d6d3ce;"></div>
<div class="a" style="left:627px;top:59px;width:476px;height:18px;background:#838083"></div>
<svg class="a" style="left:630px;top:61px" width="16" height="16"><defs><linearGradient id="tg2" x1="0" y1="0" x2="1" y2="0"><stop offset="0" stop-color="#c8d4ff"/><stop offset="0.5" stop-color="#6078f0"/><stop offset="1" stop-color="#1a2cb0"/></linearGradient></defs><path d="M7.5 1.2L14.3 14.5H0.7Z" fill="url(#tg2)" stroke="#000060" stroke-width="1.1" stroke-linejoin="miter"/><path d="M7 3.5L2.5 13" stroke="#fff" stroke-width="1"/><rect x="1" y="13" width="13" height="1.6" fill="#0010a0"/></svg>
<div class="t b" style="left:647px;top:63px;letter-spacing:0.27px;color:#d8d4cc">Vacaciones Parciales</div>
<div class="a" style="left:1085px;top:60px;width:16px;height:15px;background:#d6d3ce;border:1px solid;border-color:#fff #404040 #404040 #fff;box-shadow:inset -1px -1px 0 #808080;"></div>
<svg class="a" style="left:1085px;top:60px" width="16" height="15"><path d="M4.5 3.5L10.5 10.5M10.5 3.5L4.5 10.5" stroke="#000" stroke-width="1.5"/></svg>
<div class="a" style="left:632px;top:119px;width:462px;height:248px;background:#f6f6f6;border-top:1px solid #fff;border-left:1px solid #fff;border-right:2px solid #222;border-bottom:2px solid #222"></div>
<div class="a" style="left:632px;top:97px;width:52px;height:23px;background:#f6f6f6;border-top:1px solid #fff;border-left:1px solid #fff;border-right:2px solid #222"></div>
<div class="t " style="left:638px;top:103px;">General</div>
<div class="t " style="left:650px;top:128px;color:#0c820c">39536687</div>
<div class="t " style="left:729px;top:128px;color:#0c820c">VERA ESPINOSA</div>
<div class="t " style="left:889px;top:128px;color:#0c820c">MARIA CELINA</div>
<div class="a" style="left:692px;top:160px;width:102px;height:1px;background:#000"></div>
<div class="t " style="left:796px;top:150px;">Fechas Programadas</div>
<div class="a" style="left:903px;top:160px;width:114px;height:1px;background:#000"></div>
<div class="t " style="left:739px;top:167px;">Salida :</div>
<div class="t " style="left:783px;top:167px;">23.02.2011</div>
<div class="t " style="left:860px;top:167px;">Regreso :</div>
<div class="t " style="left:916px;top:167px;">12.03.2011</div>
<div class="t " style="left:842px;top:179px;">1</div>
<div class="a" style="left:699px;top:199px;width:312px;height:1px;background:#000"></div>
<div class="t " style="left:861px;top:203px;">Ano</div>
<div class="t " style="left:903px;top:203px;">Mes</div>
<div class="t " style="left:946px;top:203px;">Periodo</div>
<div class="a" style="left:645px;top:225px;width:13px;height:13px;background:#fff;border:1px solid;border-color:#808080 #d6d3ce #d6d3ce #808080;box-shadow:inset 1px 1px 0 #404040"></div>
<svg class="a" style="left:645px;top:225px" width="13" height="13"><path d="M3.5 6L5.5 9L10 3.5" stroke="#000" stroke-width="2" fill="none"/></svg>
<div class="t " style="left:662px;top:225px;letter-spacing:-0.25px">Maneja Periodo de Pago ?</div>
<div class="t " style="left:809px;top:224px;">Pagar el :</div>
<div class="a" style="left:861px;top:223px;width:38px;height:18px;background:#fff;border:1px solid #000"></div>
<div class="t " style="left:864px;top:227px;">2011</div>
<div class="a" style="left:903px;top:223px;width:38px;height:18px;background:#fff;border:1px solid #000"></div>
<div class="t " style="left:906px;top:227px;">12</div>
<div class="a" style="left:947px;top:223px;width:38px;height:18px;background:#fff;border:1px solid #000"></div>
<div class="t " style="left:950px;top:227px;">01</div>
<div class="a" style="left:989px;top:223px;width:18px;height:18px;background:#d6d3ce;border:1px solid;border-color:#fff #404040 #404040 #fff;box-shadow:inset -1px -1px 0 #808080;"></div>
<div class="t " style="left:993px;top:227px;">...</div>
<div class="a" style="left:645px;top:257px;width:439px;height:47px;border:1px solid #a0a0a0;box-shadow:1px 1px 0 #fff"></div>
<div class="a" style="left:651px;top:254px;width:150px;height:8px;background:#f6f6f6"></div>
<div class="t " style="left:653px;top:252px;">Fechas Reales de Liquidacion</div>
<div class="t " style="left:653px;top:277px;">Salida :</div>
<div class="a" style="left:692px;top:276px;width:65px;height:18px;background:#fff;border:1px solid #000"></div>
<div class="t " style="left:695px;top:280px;">24.01.2012</div>
<div class="a" style="left:760px;top:276px;width:19px;height:18px;background:#d6d3ce;border:1px solid;border-color:#fff #404040 #404040 #fff;box-shadow:inset -1px -1px 0 #808080;"></div>
<div class="t " style="left:766px;top:280px;">C</div>
<div class="t " style="left:798px;top:277px;"># de Días :</div>
<div class="a" style="left:857px;top:276px;width:44px;height:18px;background:#fff;border:1px solid #000"></div>
<div class="t " style="left:860px;top:280px;">2.00</div>
<div class="t " style="left:912px;top:277px;">Regreso :</div>
<div class="a" style="left:963px;top:276px;width:71px;height:18px;background:#fff;border:1px solid #000"></div>
<div class="t " style="left:966px;top:280px;">26.01.2012</div>
<div class="a" style="left:1038px;top:276px;width:18px;height:18px;background:#d6d3ce;border:1px solid;border-color:#fff #404040 #404040 #fff;box-shadow:inset -1px -1px 0 #808080;"></div>
<div class="t " style="left:1043px;top:280px;">C</div>
<div class="a" style="left:647px;top:314px;width:439px;height:48px;border:1px solid #a0a0a0;box-shadow:1px 1px 0 #fff"></div>
<div class="a" style="left:653px;top:310px;width:140px;height:8px;background:#f6f6f6"></div>
<div class="t " style="left:655px;top:309px;">Fechas Reales de Disfrute :</div>
<div class="t " style="left:655px;top:333px;">Salida :</div>
<div class="a" style="left:694px;top:332px;width:66px;height:18px;background:#fff;border:1px solid #000"></div>
<div class="a" style="left:765px;top:332px;width:18px;height:18px;background:#d6d3ce;border:1px solid;border-color:#fff #404040 #404040 #fff;box-shadow:inset -1px -1px 0 #808080;"></div>
<div class="t " style="left:770px;top:336px;">C</div>
<div class="t " style="left:910px;top:331px;">Regreso :</div>
<div class="a" style="left:966px;top:330px;width:71px;height:18px;background:#fff;border:1px solid #000"></div>
<div class="a" style="left:1041px;top:330px;width:18px;height:18px;background:#d6d3ce;border:1px solid;border-color:#fff #404040 #404040 #fff;box-shadow:inset -1px -1px 0 #808080;"></div>
<div class="t " style="left:1046px;top:334px;">C</div>
<svg class="a" style="left:758px;top:375px" width="22" height="21"><path d="M3 11 L8 17 L19 3" stroke="#f8a428" stroke-width="4.5" fill="none" stroke-linecap="round" stroke-linejoin="round"/></svg>
<div class="t b" style="left:789px;top:381px;letter-spacing:0.4px">Aceptar</div>
<svg class="a" style="left:855px;top:375px" width="20" height="21"><path d="M4 4 L16 17 M16 4 L4 17" stroke="#f8a428" stroke-width="4.5" fill="none" stroke-linecap="round"/></svg>
<div class="t b" style="left:885px;top:381px;letter-spacing:0.5px"><u>C</u>ancelar</div>
<div class="a" style="left:0px;top:717px;width:1364px;height:1px;background:#808080"></div>
<div class="a" style="left:0px;top:718px;width:1364px;height:1px;background:#fff"></div>
<div class="a" style="left:0px;top:719px;width:1364px;height:1px;background:#000"></div>
<div class="a" style="left:0px;top:720px;width:1364px;height:1px;background:#fff"></div>
<div class="a" style="left:0px;top:721px;width:1364px;height:20px;background:#d6d3ce"></div>
<div class="a" style="left:8px;top:723px;width:956px;height:15px;border:1px solid;border-color:#808080 #fff #fff #808080"></div>
<div class="a" style="left:972px;top:723px;width:120px;height:15px;border:1px solid;border-color:#808080 #fff #fff #808080"></div>
<div class="a" style="left:1100px;top:723px;width:180px;height:15px;border:1px solid;border-color:#808080 #fff #fff #808080"></div>
<div class="a" style="left:1288px;top:723px;width:69px;height:15px;border:1px solid;border-color:#808080 #fff #fff #808080"></div>
<div class="a" style="left:314px;top:590px;width:759px;height:139px;background:#d6d3ce;border:1px solid;border-color:#d6d3ce #404040 #404040 #d6d3ce;box-shadow:inset 1px 1px 0 #fff,inset -1px -1px 0 #808080,inset 2px 2px 0 #d6d3ce,inset -2px -2px 0 #d6d3ce;"></div>
<div class="a" style="left:317px;top:593px;width:753px;height:17px;background:#0a246a"></div>
<div class="t b" style="left:319px;top:595px;color:#fff;letter-spacing:0.4px">Registro no actualizado</div>
<div class="a" style="left:1053px;top:594px;width:16px;height:14px;background:#d6d3ce;border:1px solid;border-color:#fff #404040 #404040 #fff;box-shadow:inset -1px -1px 0 #808080;"></div>
<svg class="a" style="left:1053px;top:594px" width="16" height="14"><path d="M4.5 3.5L10.5 9.5M10.5 3.5L4.5 9.5" stroke="#808080" stroke-width="1.5"/></svg>
<svg class="a" style="left:325px;top:630px" width="36" height="36"><defs><linearGradient id="wy" x1="0" y1="0" x2="1" y2="1"><stop offset="0" stop-color="#fff870"/><stop offset="1" stop-color="#f0c800"/></linearGradient></defs><path d="M16.5 3 Q17.5 2 18.5 3.5 L31.5 28 Q32.5 31 30 31 L4 31 Q1.5 31 2.5 28 L14.5 3.5Z" fill="#102070" transform="translate(1.6,1.6)"/><path d="M16.5 3 Q17.5 2 18.5 3.5 L31.5 28 Q32.5 31 30 31 L4 31 Q1.5 31 2.5 28 L14.5 3.5Z" fill="url(#wy)"/><path d="M14 11 Q16 8.5 18.5 11 L17 23 L15.5 23Z" fill="#000"/><circle cx="16.3" cy="26.5" r="2" fill="#000"/></svg>
<div class="t " style="left:365px;top:636px;letter-spacing:-0.18px">Ocurrio un error (Violation of PRIMARY KEY constraint 'VACLLAVE'. Cannot insert duplicate key in object 'dbo.VAC'. (23000)) al cambiar la tabla</div>
<div class="t " style="left:365px;top:649px;">VAC .</div>
<div class="a" style="left:656px;top:686px;width:75px;height:24px;background:#d6d3ce;border:1px solid #000"></div>
<div class="a" style="left:657px;top:687px;width:73px;height:22px;background:#d6d3ce;border:1px solid;border-color:#fff #404040 #404040 #fff;box-shadow:inset -1px -1px 0 #808080;"></div>
<div class="a" style="left:660px;top:690px;width:67px;height:16px;border:1px dotted #000"></div>
<div class="t " style="left:685px;top:692px;">OK</div>
<div class="a" style="left:0px;top:740px;width:1364px;height:1px;background:#d6d3ce"></div>
<div class="a" style="left:0px;top:741px;width:1364px;height:1px;background:#fff"></div>
<div class="a" style="left:0px;top:742px;width:1364px;height:26px;background:#d6d3ce"></div>
<div class="a" style="left:2px;top:744px;width:52px;height:22px;background:#d6d3ce;border:1px solid;border-color:#fff #404040 #404040 #fff;box-shadow:inset -1px -1px 0 #808080;"></div>
<svg class="a" style="left:4px;top:746px" width="16" height="16"><path d="M1.5 3.5 Q4 1.5 7.5 3 L6.7 8 Q3.5 6.5 0.8 8.2Z" fill="#f05a20"/><path d="M8.5 3.2 Q11.5 5 15.5 3 L14.6 8 Q11 9.8 7.7 8.2Z" fill="#50b030"/><path d="M0.6 9.2 Q3.4 7.6 6.5 9 L5.7 14 Q2.8 12.6 0 14.2Z" fill="#3080e8"/><path d="M7.5 9.2 Q10.8 10.8 14.4 9 L13.6 14 Q10 15.8 6.7 14.2Z" fill="#f8c020"/></svg>
<div class="t b" style="left:22px;top:750px;font-size:12px">Start</div>
<div class="a" style="left:61px;top:746px;width:1px;height:19px;background:#fff"></div>
<div class="a" style="left:62px;top:746px;width:1px;height:19px;background:#808080"></div>
<div class="a" style="left:120px;top:746px;width:1px;height:19px;background:#fff"></div>
<div class="a" style="left:121px;top:746px;width:1px;height:19px;background:#808080"></div>
<svg class="a" style="left:70px;top:746px" width="17" height="18"><rect x="1" y="2" width="14" height="14" rx="1.5" fill="#2a70d8" stroke="#103890"/><path d="M4 5h7v8H4z" fill="#fff"/><path d="M6 11 L12 5" stroke="#1a3a90" stroke-width="1.6"/><circle cx="14" cy="5" r="1.5" fill="#e04020"/></svg>
<svg class="a" style="left:94px;top:746px" width="18" height="18"><circle cx="9" cy="9.5" r="6.2" fill="#2a8ee8"/><circle cx="9" cy="9.5" r="3.6" fill="#fff"/><rect x="5.5" y="8.6" width="7" height="1.8" fill="#2a8ee8"/><rect x="9" y="10.4" width="5" height="2.4" fill="#2a8ee8"/><path d="M2 15 Q1 9 8 5 Q14 1 17 2.5 Q15 5 12 5" stroke="#f0b828" stroke-width="1.6" fill="none"/></svg>
<div class="a" style="left:127px;top:744px;width:159px;height:22px;background:#d6d3ce;border:1px solid;border-color:#fff #404040 #404040 #fff;box-shadow:inset -1px -1px 0 #808080;"></div>
<svg class="a" style="left:132px;top:747px" width="16" height="17"><path d="M2 2h6v7H2z" fill="#f0d040" stroke="#a08020" stroke-width="0.8"/><rect x="6" y="6" width="9" height="9" fill="none" stroke="#40a040" stroke-dasharray="1 1"/><path d="M5 15 L12 8 M9 6 L13 10" stroke="#606060" stroke-width="1.6"/><circle cx="12" cy="12" r="2.2" fill="none" stroke="#404040"/></svg>
<div class="t " style="left:151px;top:749px;">Microsoft SQL Server Ma...</div>
<div class="a" style="left:290px;top:744px;width:159px;height:22px;background:#d6d3ce;border:1px solid;border-color:#fff #404040 #404040 #fff;box-shadow:inset -1px -1px 0 #808080;"></div>
<svg class="a" style="left:295px;top:747px" width="16" height="17"><path d="M1 5 L1 14 L15 14 L15 4 L7 4 L6 2 L2 2Z" fill="#f0c850" stroke="#a07010" stroke-width="0.8"/><circle cx="8" cy="9" r="3.5" fill="#c8f0f8" stroke="#608080" stroke-width="0.8"/><path d="M11 12 L14 15" stroke="#806030" stroke-width="1.6"/></svg>
<div class="t " style="left:314px;top:749px;">MIDAST2012</div>
<div class="a" style="left:453px;top:744px;width:159px;height:22px;background:#d6d3ce;border:1px solid;border-color:#fff #404040 #404040 #fff;box-shadow:inset -1px -1px 0 #808080;"></div>
<svg class="a" style="left:458px;top:747px" width="16" height="17"><rect x="6" y="2" width="9" height="14" fill="#90a8a0" stroke="#406050" stroke-width="0.8"/><rect x="8" y="4" width="5" height="3" fill="#e0f0e0"/><path d="M8 9h5v5H8z" fill="#40a040"/><path d="M5 4 Q1 6 3 11" stroke="#40a040" stroke-width="1.8" fill="none"/><path d="M1 9 L5 12 L5 8Z" fill="#40a040"/></svg>
<div class="t " style="left:477px;top:749px;">Activity Monitor - SRVBD...</div>
<div class="a" style="left:616px;top:744px;width:159px;height:22px;background:#d6d3ce;border:1px solid;border-color:#fff #404040 #404040 #fff;box-shadow:inset -1px -1px 0 #808080;"></div>
<svg class="a" style="left:621px;top:747px" width="16" height="17"><rect x="3" y="1" width="11" height="15" rx="1" fill="#7090e0" stroke="#3050a0" stroke-width="0.8"/><rect x="5" y="3" width="7" height="3" fill="#d0e0ff"/><g fill="#d0e0ff"><rect x="5" y="8" width="2" height="2"/><rect x="8" y="8" width="2" height="2"/><rect x="11" y="8" width="1.5" height="2"/><rect x="5" y="11" width="2" height="2"/><rect x="8" y="11" width="2" height="2"/></g></svg>
<div class="t " style="left:640px;top:749px;">Calculator</div>
<div class="a" style="left:779px;top:744px;width:159px;height:22px;background:#d6d3ce;border:1px solid;border-color:#fff #404040 #404040 #fff;box-shadow:inset -1px -1px 0 #808080;"></div>
<svg class="a" style="left:784px;top:747px" width="16" height="17"><path d="M1 3 L6 1 L10 5 L15 2 L14 9 L2 9Z" fill="#f0c060" stroke="#805020" stroke-width="0.6"/><circle cx="4" cy="5" r="1.5" fill="#302010"/><rect x="1" y="10" width="12" height="5" fill="#2040a0"/><path d="M8 12 L15 12 L12 9 M15 12 L12 15" stroke="#2040a0" stroke-width="1.4" fill="none"/></svg>
<div class="t " style="left:803px;top:749px;">Sistema Nomina ISABEL ...</div>
<div class="a" style="left:942px;top:744px;width:158px;height:22px;background:repeating-conic-gradient(#d6d3ce 0 25%,#fff 0 50%) 0 0/2px 2px;border:1px solid;border-color:#404040 #fff #fff #404040;box-shadow:inset 1px 1px 0 #808080"></div>
<svg class="a" style="left:947px;top:747px" width="17" height="17"><rect x="0.5" y="0.5" width="16" height="16" fill="#a09040" stroke="#c8b850"/><rect x="2" y="2" width="13" height="10" fill="#0c3a9a"/><path d="M3 9 Q4 3 12 3.5 Q8 6 7 9Z" fill="#f0c840"/><rect x="2" y="12" width="13" height="4" fill="#807838"/></svg>
<div class="t b" style="left:966px;top:750px;">Modulo de Vacacione...</div>
<div class="a" style="left:1210px;top:744px;width:152px;height:23px;border:1px solid;border-color:#808080 #fff #fff #808080"></div>
<svg class="a" style="left:1213px;top:746px" width="16" height="17"><path d="M2 11 L9 7 L15 12 L8 16Z" fill="#a0a0a0" stroke="#606060" stroke-width="0.8"/><path d="M5 12 L9 10 L12 12" stroke="#303030" stroke-width="0.8" fill="none"/><path d="M1 5 L6 1 L6 3 L11 3 L11 7 L6 7 L6 9Z" fill="#40b030" stroke="#207020" stroke-width="0.6"/></svg>
<svg class="a" style="left:1231px;top:746px" width="16" height="17"><rect x="6" y="1" width="9" height="8" rx="1.5" fill="#60b8f0" stroke="#3080d0" stroke-width="0.8"/><rect x="1" y="5" width="9" height="8" rx="1.5" fill="#80c8f8" stroke="#3080d0" stroke-width="0.8"/><ellipse cx="6" cy="15" rx="4.5" ry="1.8" fill="#b0c8e8"/></svg>
<svg class="a" style="left:1249px;top:746px" width="15" height="17"><rect x="0" y="1" width="14" height="14" fill="#fff"/><path d="M1 2 L4 2 L6 9 L11 2 L14 2 L6 14 L4 14Z" fill="#e01020"/><path d="M8 9 L14 15 M10 15 L14 15 L14 11" stroke="#000" stroke-width="2" fill="none"/></svg>
<svg class="a" style="left:1267px;top:747px" width="15" height="16"><rect x="0.5" y="0.5" width="14" height="14" rx="2" fill="#808080" stroke="#505050"/><text x="1.5" y="11" font-family="Liberation Sans" font-weight="bold" font-size="9" fill="#fff">vm</text></svg>
<svg class="a" style="left:1284px;top:746px" width="18" height="18"><rect x="7" y="2" width="8" height="7" fill="#f0f060" stroke="#606020" stroke-width="0.6"/><rect x="1" y="4" width="11" height="7" fill="#20a020" stroke="#104010" stroke-width="0.8"/><path d="M3 12v4M3 14h3v2M8 13v4M8 13h3v2h-3" stroke="#1020a0" stroke-width="1.2" fill="none"/></svg>
<div class="t " style="left:1311px;top:750px;letter-spacing:-0.2px">1:40 PM</div>
</body></html>
